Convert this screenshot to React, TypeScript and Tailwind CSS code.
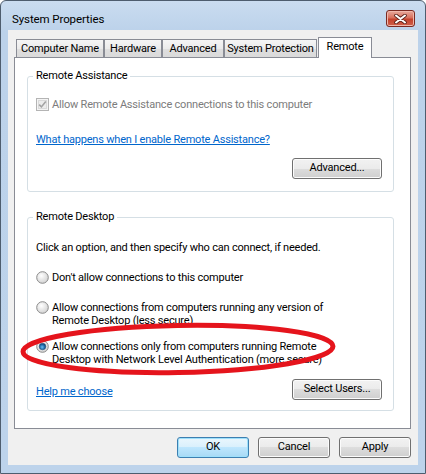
import React from "react";

function Checkbox() {
  return (
    <svg width="13" height="13" viewBox="0 0 13 13" className="shrink-0">
      <rect x="0.5" y="0.5" width="12" height="12" fill="#f4f4f4" stroke="#b4b4b4" />
      <rect x="2.5" y="2.5" width="8" height="8" fill="#ececec" stroke="#dadada" />
      <path d="M3.2 6.6 L5.4 8.9 L9.8 3.4" fill="none" stroke="#a3a3a3" strokeWidth="1.6" />
    </svg>
  );
}

function Radio({ on, id }: { on?: boolean; id: string }) {
  return (
    <svg width="13" height="13" viewBox="0 0 13 13" className="shrink-0">
      <defs>
        <radialGradient id={`rg${id}`} cx="0.4" cy="0.35" r="0.7">
          <stop offset="0" stopColor="#ffffff" />
          <stop offset="1" stopColor="#d0d0d0" />
        </radialGradient>
        <radialGradient id={`dot${id}`} cx="0.45" cy="0.6" r="0.6">
          <stop offset="0" stopColor="#6fc0f3" />
          <stop offset="0.6" stopColor="#1f6aa8" />
          <stop offset="1" stopColor="#0b3562" />
        </radialGradient>
      </defs>
      <circle cx="6.5" cy="6.5" r="5.8" fill={`url(#rg${id})`} stroke="#8a8a8a" strokeWidth="1" />
      {on && <circle cx="6.5" cy="6.5" r="3.3" fill={`url(#dot${id})`} stroke="#2b5680" strokeWidth="0.6" />}
    </svg>
  );
}

export default function App() {
  return (
    <div className="relative w-[426px] h-[474px] bg-white [font-family:Roboto,sans-serif] text-[11px] tracking-[-0.2px] text-black whitespace-nowrap">
      <div className="w-full h-full rounded-t-[6px] border border-[#4e5d6e] bg-[linear-gradient(to_bottom,#cadcf0,#bcd2ea_30px,#bdd3eb)] flex flex-col">
        {/* Title bar */}
        <div className="h-[29px] flex items-start shrink-0">
          <div className="ml-[11px] mt-[11px] leading-[14px] text-[11.5px] tracking-[-0.1px]">System Properties</div>
          <div className="ml-auto mr-[10px] mt-[9px] w-[29px] h-[17px] rounded-[3px] border border-[#7b2a22] bg-[linear-gradient(to_bottom,#e8a99c_0%,#d7705d_45%,#c4412c_55%,#d0614c_100%)] shadow-[inset_0_0_0_1px_#f0b7ab] flex items-center justify-center">
            <svg width="13" height="10" viewBox="0 0 13 10">
              <path d="M2 1.5 L11 8.5 M11 1.5 L2 8.5" stroke="#5a2018" strokeWidth="3.6" strokeLinecap="round" />
              <path d="M2 1.5 L11 8.5 M11 1.5 L2 8.5" stroke="#ffffff" strokeWidth="2" strokeLinecap="round" />
            </svg>
          </div>
        </div>

        {/* Client area */}
        <div className="mx-[7px] h-[435px] bg-[#f0f0f0] flex flex-col pl-[6px] pt-[7px]">
          {/* Tabs */}
          <div className="flex items-end pl-[2px] h-[20px] relative z-10">
            <div className="w-[88px] h-[18px] border-t border-l border-r border-[#898c95] bg-[linear-gradient(to_bottom,#f5f5f5,#ebebeb_50%,#dfdfdf_50%,#dadada)] flex items-center justify-center pt-[1px]">Computer Name</div>
            <div className="w-[58px] h-[18px] border-t border-l border-r border-[#898c95] bg-[linear-gradient(to_bottom,#f5f5f5,#ebebeb_50%,#dfdfdf_50%,#dadada)] flex items-center justify-center pt-[1px]">Hardware</div>
            <div className="w-[62px] h-[18px] border-t border-l border-r border-[#898c95] bg-[linear-gradient(to_bottom,#f5f5f5,#ebebeb_50%,#dfdfdf_50%,#dadada)] flex items-center justify-center pt-[1px]">Advanced</div>
            <div className="w-[93px] h-[18px] border-t border-l border-r border-[#898c95] bg-[linear-gradient(to_bottom,#f5f5f5,#ebebeb_50%,#dfdfdf_50%,#dadada)] flex items-center justify-center pt-[1px]">System Protection</div>
            <div className="ml-[1px] w-[54px] h-[21px] -mb-px border-t border-l border-r border-[#898c95] bg-white flex items-center justify-center pb-[1px]">Remote</div>
          </div>

          {/* Panel */}
          <div className="w-[397px] h-[372px] border border-[#898c95] bg-white flex flex-col pl-[12px] pt-[18px]">
            {/* Remote Assistance */}
            <div className="relative w-[367px] h-[116px] border border-[#d5dfe5] rounded-[3px] flex flex-col pl-[8px]">
              <span className="absolute left-[5px] top-[-9px] px-[3px] bg-white leading-[15px]">Remote Assistance</span>
              <div className="mt-[21px] h-[13px] flex items-center gap-[3px]">
                <Checkbox />
                <span className="leading-[13px] text-[#7c7c7c]">Allow Remote Assistance connections to this computer</span>
              </div>
              <a className="mt-[21px] leading-[15px] text-[#0066cc] underline self-start">What happens when I enable Remote Assistance?</a>
              <div className="mt-[11px] self-end mr-[11px] w-[90px] h-[21px] rounded-[3px] border border-[#707070] bg-[linear-gradient(to_bottom,#f2f2f2_0%,#ebebeb_50%,#dddddd_50%,#cfcfcf_100%)] shadow-[inset_0_0_0_1px_#fcfcfc] flex items-center justify-center">Advanced...</div>
            </div>

            {/* Remote Desktop */}
            <div className="relative mt-[25px] w-[367px] h-[194px] border border-[#d5dfe5] rounded-[3px] flex flex-col pl-[8px]">
              <span className="absolute left-[5px] top-[-9px] px-[3px] bg-white leading-[15px]">Remote Desktop</span>
              <div className="mt-[22px] leading-[15px]">Click an option, and then specify who can connect, if needed.</div>
              <div className="mt-[16px] flex items-start gap-[3px]">
                <Radio id="a" />
                <span className="leading-[13px]">Don't allow connections to this computer</span>
              </div>
              <div className="mt-[17px] flex items-start gap-[3px]">
                <Radio id="b" />
                <span className="leading-[13px]">Allow connections from computers running any version of<br />Remote Desktop (less secure)</span>
              </div>
              <div className="mt-[13px] flex items-start gap-[3px]">
                <Radio id="c" on />
                <span className="leading-[13px]">Allow connections only from computers running Remote<br />Desktop with Network Level Authentication (more secure)</span>
              </div>
              <div className="mt-[13px] flex items-start">
                <a className="mt-[5px] leading-[15px] text-[#0066cc] underline">Help me choose</a>
                <div className="ml-auto mr-[11px] w-[90px] h-[21px] rounded-[3px] border border-[#707070] bg-[linear-gradient(to_bottom,#f2f2f2_0%,#ebebeb_50%,#dddddd_50%,#cfcfcf_100%)] shadow-[inset_0_0_0_1px_#fcfcfc] flex items-center justify-center">Select Users...</div>
              </div>
            </div>
          </div>

          {/* Dialog buttons */}
          <div className="mt-[8px] flex justify-end gap-[9px] pr-[7px]">
            <div className="w-[72px] h-[21px] rounded-[3px] border border-[#3c7fb1] bg-[linear-gradient(to_bottom,#eaf6fd_0%,#d9f0fc_50%,#bee6fd_50%,#a7d9f5_100%)] shadow-[inset_0_0_0_1px_#9ee0fb] flex items-center justify-center">OK</div>
            <div className="w-[72px] h-[21px] rounded-[3px] border border-[#707070] bg-[linear-gradient(to_bottom,#f2f2f2_0%,#ebebeb_50%,#dddddd_50%,#cfcfcf_100%)] shadow-[inset_0_0_0_1px_#fcfcfc] flex items-center justify-center">Cancel</div>
            <div className="w-[72px] h-[21px] rounded-[3px] border border-[#707070] bg-[linear-gradient(to_bottom,#f2f2f2_0%,#ebebeb_50%,#dddddd_50%,#cfcfcf_100%)] shadow-[inset_0_0_0_1px_#fcfcfc] flex items-center justify-center">Apply</div>
          </div>
        </div>
      </div>

      {/* Red annotation ellipse */}
      <svg className="absolute left-0 top-0 pointer-events-none" width="426" height="474" viewBox="0 0 426 474">
        <ellipse cx="178" cy="349" rx="155" ry="23.5" fill="none" stroke="#e5141c" strokeWidth="5" transform="rotate(-1 178 349)" />
      </svg>
    </div>
  );
}
